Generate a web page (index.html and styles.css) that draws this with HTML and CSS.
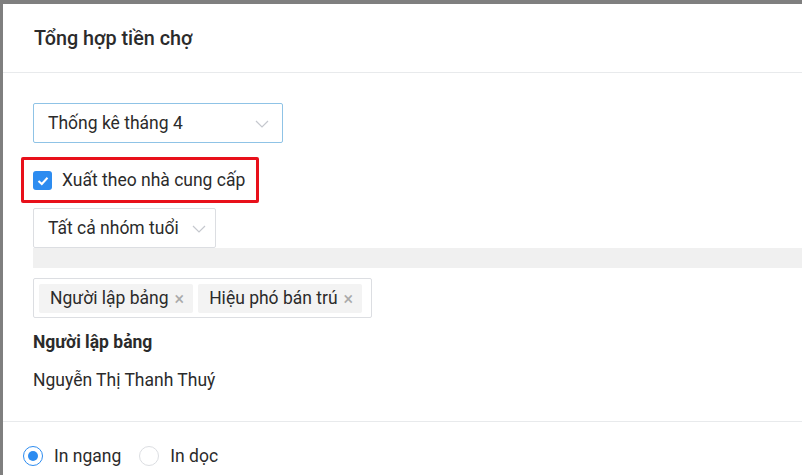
FILE: index.html
```html
<!DOCTYPE html>
<html lang="vi">
<head>
    <meta charset="UTF-8">
    <meta name="viewport" content="width=device-width, initial-scale=1.0">
    <title>Tổng hợp tiền chợ</title>
    <link rel="stylesheet" href="styles.css">
</head>
<body>
<div class="modal">
    <div class="modal-header">
        <div class="modal-title">Tổng hợp tiền chợ</div>
    </div>

    <div class="modal-body">
        <div class="select select-month">
            <span>Thống kê tháng 4</span>
            <svg class="chevron" width="14" height="8" viewBox="0 0 14 8"><path d="M1 1 L7 7 L13 1" fill="none" stroke="#c5c8ce" stroke-width="1.2"/></svg>
        </div>

        <label class="check-row">
            <span class="checkbox">
                <svg width="12" height="10" viewBox="0 0 12 10"><path d="M1.5 5 L4.8 8 L10.5 1.8" fill="none" stroke="#fff" stroke-width="2"/></svg>
            </span>
            <span>Xuất theo nhà cung cấp</span>
        </label>

        <div class="select select-age">
            <span>Tất cả nhóm tuổi</span>
            <svg class="chevron" width="14" height="8" viewBox="0 0 14 8"><path d="M1 1 L7 7 L13 1" fill="none" stroke="#c5c8ce" stroke-width="1.2"/></svg>
        </div>
        <div class="gray-bar"></div>

        <div class="tag-box">
            <span class="tag">Người lập bảng <i class="tag-close">×</i></span>
            <span class="tag">Hiệu phó bán trú <i class="tag-close">×</i></span>
        </div>

        <div class="field-label">Người lập bảng</div>
        <div class="field-value">Nguyễn Thị Thanh Thuý</div>
    </div>

    <div class="modal-footer">
        <label class="radio-item"><span class="radio checked"></span>In ngang</label>
        <label class="radio-item"><span class="radio"></span>In dọc</label>
    </div>
</div>
</body>
</html>
```

FILE: styles.css
```css
body {
    margin: 0;
    background-color: #7f7f7f;
    font-family: Roboto, "Liberation Sans", Arial, sans-serif;
    color: #2b2b2b;
    font-size: 17.5px;
    height: 475px;
    overflow: hidden;
}

.modal {
    margin: 4px 0 0 3px;
    background-color: #fff;
    height: 471px;
}

.modal-header {
    height: 68px;
    padding: 0 31px;
    display: flex;
    align-items: center;
    border-bottom: 1px solid #e8eaec;
}

.modal-title {
    font-size: 19.8px;
    font-weight: 500;
    color: #2b2b2b;
}

.modal-body {
    padding: 30px 0 0 30px;
    height: 318px;
}

.select {
    box-sizing: border-box;
    height: 40px;
    border: 1px solid #dcdee2;
    border-radius: 2px;
    display: flex;
    align-items: center;
    justify-content: space-between;
    padding: 0 13px 0 14px;
}

.select-month {
    width: 250px;
    border-color: #8fc3e6;
}

.select-age {
    width: 183px;
    padding-right: 9px;
    margin-top: 5px;
}

.chevron {
    margin-top: 1px;
}

.check-row {
    position: relative;
    display: flex;
    align-items: center;
    height: 46px;
    margin-top: 14px;
    gap: 10px;
}

.check-row::after {
    content: "";
    position: absolute;
    left: -12px;
    top: 0;
    width: 238px;
    height: 46px;
    box-sizing: border-box;
    border: 3px solid #e8101a;
    border-radius: 2px;
}

.checkbox {
    width: 19px;
    height: 19px;
    border-radius: 3px;
    background-color: #2d8cf0;
    display: flex;
    align-items: center;
    justify-content: center;
    margin-top: 1px;
}

.gray-bar {
    height: 20px;
    background-color: #f0f0f0;
}

.tag-box {
    box-sizing: border-box;
    margin-top: 10px;
    width: 339px;
    height: 40px;
    border: 1px solid #dcdee2;
    border-radius: 2px;
    display: flex;
    align-items: center;
    padding-left: 5px;
    gap: 5px;
}

.tag {
    background-color: #f3f3f3;
    height: 29px;
    display: flex;
    align-items: center;
    padding: 0 9px 0 11px;
    border-radius: 2px;
    white-space: nowrap;
}

.tag-close {
    font-style: normal;
    color: #aaa;
    font-size: 18px;
    margin-left: 6px;
}

.field-label {
    font-weight: bold;
    margin-top: 12px;
    line-height: 24px;
}

.field-value {
    margin-top: 14px;
    line-height: 24px;
}

.modal-footer {
    border-top: 1px solid #e8eaec;
    padding: 22px 20px 0 20px;
    display: flex;
    align-items: center;
    gap: 18px;
}

.radio-item {
    display: flex;
    align-items: center;
    gap: 11px;
    line-height: 24px;
}

.radio {
    box-sizing: border-box;
    width: 20px;
    height: 20px;
    border-radius: 50%;
    border: 1px solid #dcdee2;
    display: flex;
    align-items: center;
    justify-content: center;
}

.radio.checked {
    border-color: #2d8cf0;
}

.radio.checked::after {
    content: "";
    width: 10px;
    height: 10px;
    border-radius: 50%;
    background-color: #2d8cf0;
}
```
